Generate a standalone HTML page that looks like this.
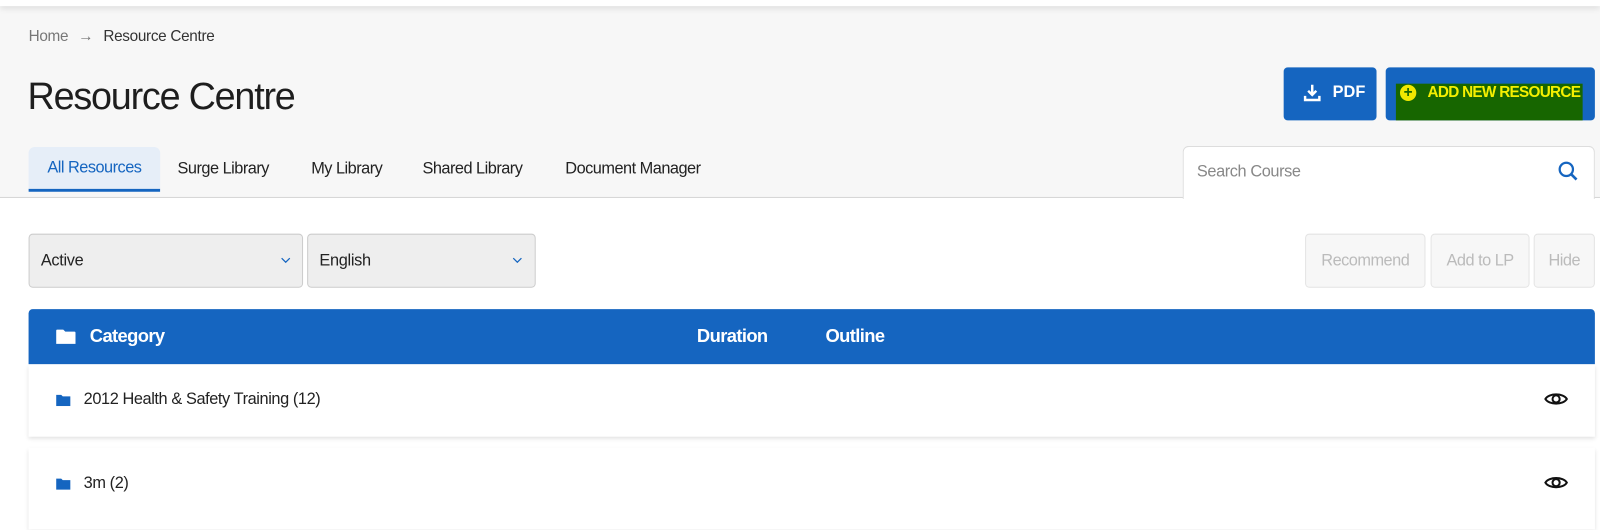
<!DOCTYPE html>
<html><head><meta charset="utf-8"><style>
*{box-sizing:border-box;margin:0;padding:0}
body{width:1600px;height:513px;overflow:hidden;background:#fff;font-family:"Liberation Sans",sans-serif;color:#222}
#w{position:relative;width:1568px;height:503px;transform:scale(1.0204);transform-origin:0 0}
.top{position:absolute;left:0;top:0;width:1568px;height:194px;background:#f7f7f7;border-bottom:1px solid #d6d6d6}
.strip{position:absolute;left:0;top:0;width:1568px;height:6px;background:#fff;box-shadow:0 2px 6px rgba(0,0,0,.12)}
.abs{position:absolute}
.tab{position:absolute;top:144px;height:44px;line-height:44px;font-size:16px;color:#222;letter-spacing:-.5px}
.btn{position:absolute;background:#1565c0;border-radius:4px;color:#fff;font-weight:bold}
.sel{position:absolute;top:229px;height:53px;background:#eee;border:1px solid #ccc;border-radius:4px;font-size:16px;line-height:51px;padding-left:11px;letter-spacing:-.3px}
.sel svg{position:absolute;top:22px}
.gb{position:absolute;top:229px;height:53px;border:1px solid #e4e4e4;border-radius:4px;background:#f7f7f7;color:#bbb;font-size:16px;line-height:51px;text-align:center;letter-spacing:-.5px}
.row{position:absolute;left:28px;width:1535px;background:#fff;box-shadow:0 2px 4px rgba(0,0,0,.12)}
.row span{position:absolute;left:54px;font-size:16px;letter-spacing:-.4px}
</style></head><body><div id="w">
<div class="top"></div>
<div class="strip"></div>
<div class="abs" style="left:28px;top:27px;font-size:15px;color:#777;letter-spacing:-.3px">Home <span style="margin:0 6px">→</span> <span style="color:#333">Resource Centre</span></div>
<div class="abs" style="left:27px;top:74px;font-size:37px;color:#1e1e1e;letter-spacing:-1.2px">Resource Centre</div>
<div class="tab" style="left:28px;width:129px;background:#e6eef8;border-radius:6px 6px 0 0;color:#1565c0;text-align:center;border-bottom:3px solid #1565c0;line-height:42px">All Resources</div>
<div class="tab" style="left:174px">Surge Library</div>
<div class="tab" style="left:305px">My Library</div>
<div class="tab" style="left:414px">Shared Library</div>
<div class="tab" style="left:554px">Document Manager</div>
<div class="btn" style="left:1258px;top:66px;width:91px;height:52px">
<svg class="abs" style="left:19px;top:16px" width="18" height="18" viewBox="0 0 18 18"><path d="M9 1v10M5 7l4 4 4-4M2 12v4h14v-4" stroke="#fff" stroke-width="2.4" fill="none"/></svg>
<span class="abs" style="left:48px;top:16px;font-size:16px">PDF</span></div>
<div class="btn" style="left:1358px;top:66px;width:205px;height:52px">
<div class="abs" style="left:10px;top:16px;width:183px;height:36px;background:#176600"></div>
<div class="abs" style="left:14px;top:17px;width:16px;height:16px;border-radius:50%;background:#f0e800;color:#176600;font-size:15px;line-height:15px;text-align:center">+</div>
<span class="abs" style="left:41px;top:16px;font-size:15px;color:#f5ef00;letter-spacing:-.7px">ADD NEW RESOURCE</span></div>
<div class="abs" style="left:1159px;top:143px;width:404px;height:52px;background:#fff;border:1px solid #ddd;border-bottom:none;border-radius:6px 6px 0 0">
<span class="abs" style="left:13px;top:16px;font-size:16px;color:#888;letter-spacing:-.4px">Search Course</span>
<svg class="abs" style="left:366px;top:13px" width="22" height="22" viewBox="0 0 22 22"><circle cx="9" cy="9" r="6.5" stroke="#1565c0" stroke-width="2.2" fill="none"/><path d="M14 14l5 5" stroke="#1565c0" stroke-width="2.6"/></svg></div>
<div class="sel" style="left:28px;width:269px">Active<svg style="left:246px" width="10" height="6" viewBox="0 0 10 6"><path d="M1 1l4 4 4-4" stroke="#1565c0" stroke-width="1.2" fill="none"/></svg></div>
<div class="sel" style="left:301px;width:224px">English<svg style="left:200px" width="10" height="6" viewBox="0 0 10 6"><path d="M1 1l4 4 4-4" stroke="#1565c0" stroke-width="1.2" fill="none"/></svg></div>
<div class="gb" style="left:1279px;width:118px">Recommend</div>
<div class="gb" style="left:1402px;width:97px">Add to LP</div>
<div class="gb" style="left:1503px;width:60px">Hide</div>
<div class="abs" style="left:28px;top:303px;width:1535px;height:54px;background:#1565c0;border-radius:4px 4px 0 0;color:#fff;font-weight:bold;font-size:18px;letter-spacing:-.6px">
<svg class="abs" style="left:27px;top:19px" width="19" height="16" viewBox="0 0 19 16"><path d="M0 2a1 1 0 011-1h6l2 2h9a1 1 0 011 1v11H0z" fill="#fff"/></svg>
<span class="abs" style="left:60px;top:16px">Category</span>
<span class="abs" style="left:655px;top:16px">Duration</span>
<span class="abs" style="left:781px;top:16px">Outline</span></div>
<div class="row" style="top:357px;height:71px">
<svg class="abs" style="left:27px;top:29px" width="14" height="12" viewBox="0 0 14 12"><path d="M0 1h5l1.5 1.5H14V12H0z" fill="#1565c0"/></svg>
<span style="top:26px">2012 Health &amp; Safety Training (12)</span>
<svg class="abs" style="left:1485px;top:25px" width="24" height="18" viewBox="0 0 24 18"><path d="M1.5 9C5 3 19 3 22.5 9 19 15 5 15 1.5 9z" stroke="#111" stroke-width="2" fill="none"/><circle cx="12" cy="9" r="3.5" stroke="#111" stroke-width="2" fill="none"/></svg></div>
<div class="row" style="top:439px;height:80px">
<svg class="abs" style="left:27px;top:29px" width="14" height="12" viewBox="0 0 14 12"><path d="M0 1h5l1.5 1.5H14V12H0z" fill="#1565c0"/></svg>
<span style="top:26px">3m (2)</span>
<svg class="abs" style="left:1485px;top:25px" width="24" height="18" viewBox="0 0 24 18"><path d="M1.5 9C5 3 19 3 22.5 9 19 15 5 15 1.5 9z" stroke="#111" stroke-width="2" fill="none"/><circle cx="12" cy="9" r="3.5" stroke="#111" stroke-width="2" fill="none"/></svg></div>
</div></body></html>
